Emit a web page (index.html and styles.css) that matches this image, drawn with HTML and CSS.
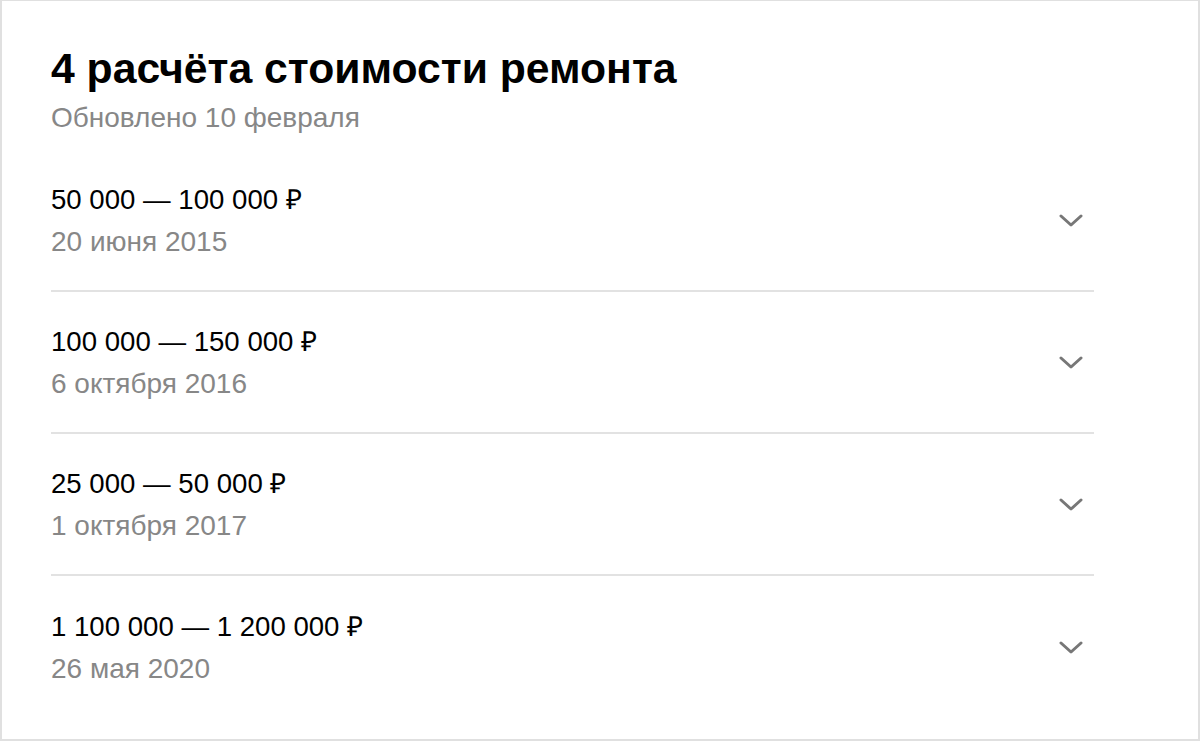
FILE: index.html
```html
<!DOCTYPE html>
<html lang="ru">
<head>
  <meta charset="UTF-8" />
  <title>Расчёты стоимости ремонта</title>
  <link rel="stylesheet" href="styles.css">
</head>
<body>
  <div class="card">
    <h1>4 расчёта стоимости ремонта</h1>
    <p class="updated">Обновлено 10 февраля</p>

    <ul class="calc-list">
      <li class="calc">
        <div class="calc-info">
          <div class="price">50 000 — 100 000 ₽</div>
          <div class="date">20 июня 2015</div>
        </div>
        <svg class="chevron" viewBox="0 0 24 14"><path d="M2 2l10 9 10-9"/></svg>
      </li>
      <li class="calc">
        <div class="calc-info">
          <div class="price">100 000 — 150 000 ₽</div>
          <div class="date">6 октября 2016</div>
        </div>
        <svg class="chevron" viewBox="0 0 24 14"><path d="M2 2l10 9 10-9"/></svg>
      </li>
      <li class="calc">
        <div class="calc-info">
          <div class="price">25 000 — 50 000 ₽</div>
          <div class="date">1 октября 2017</div>
        </div>
        <svg class="chevron" viewBox="0 0 24 14"><path d="M2 2l10 9 10-9"/></svg>
      </li>
      <li class="calc">
        <div class="calc-info">
          <div class="price">1 100 000 — 1 200 000 ₽</div>
          <div class="date">26 мая 2020</div>
        </div>
        <svg class="chevron" viewBox="0 0 24 14"><path d="M2 2l10 9 10-9"/></svg>
      </li>
    </ul>
  </div>
</body>
</html>
```

FILE: styles.css
```css
* {
  box-sizing: border-box;
  margin: 0;
  padding: 0;
}
body {
  background: #fff;
  font-family: 'Liberation Sans', Arial, sans-serif;
  color: #000;
}

/* Карточка */
.card {
  width: 1200px;
  height: 741px;
  border: 2px solid #e0e0e0;
  border-top-width: 1px;
  padding: 43px 104px 0 49px;
}
.card h1 {
  font-size: 42.7px;
  font-weight: 700;
  line-height: 48px;
}
.updated {
  margin-top: 10px;
  font-size: 28px;
  line-height: 32px;
  color: #878787;
}

/* Список расчётов */
.calc-list {
  list-style: none;
  margin-top: 16px;
}
.calc {
  display: flex;
  align-items: center;
  justify-content: space-between;
  height: 142px;
  padding-top: 2px;
  border-bottom: 2px solid #e2e2e2;
}
.calc:last-child {
  border-bottom: none;
}
.price {
  font-size: 27.6px;
  line-height: 32px;
}
.date {
  margin-top: 10px;
  font-size: 28px;
  line-height: 32px;
  color: #878787;
}
.chevron {
  width: 24px;
  height: 14px;
  margin-right: 11px;
  fill: none;
  stroke: #777;
  stroke-width: 3;
  stroke-linecap: round;
  stroke-linejoin: round;
}
```
